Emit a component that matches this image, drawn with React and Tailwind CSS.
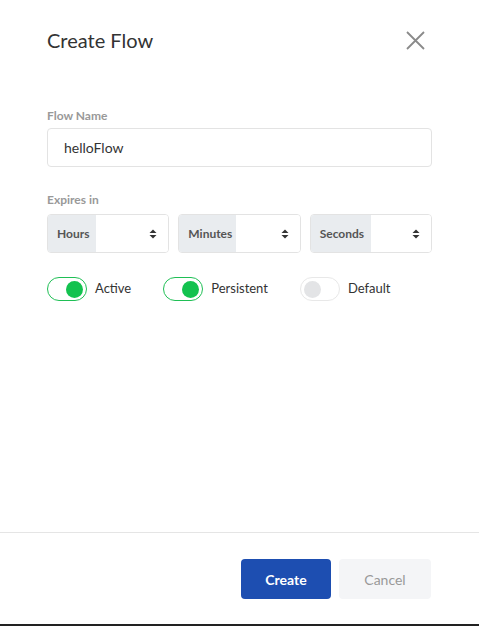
import { useState } from 'react'

function Spinner() {
  return (
    <svg width="10" height="12" viewBox="0 0 10 12" className="text-[#333]">
      <path d="M5 1.5 L8.5 5 H1.5 Z" fill="currentColor" />
      <path d="M5 10.5 L8.5 7 H1.5 Z" fill="currentColor" />
    </svg>
  )
}

function TimeField({ label, addonWidth }) {
  return (
    <div className="flex h-[39px] flex-1 overflow-hidden rounded-[4px] border border-[#e3e3e3]">
      <div
        className={`flex items-center bg-[#e9ecef] pl-[9px] text-[12px] font-bold text-[#555] ${addonWidth}`}
      >
        {label}
      </div>
      <div className="flex flex-1 items-center justify-end bg-white pr-[10px]">
        <Spinner />
      </div>
    </div>
  )
}

function Toggle({ on, label, onClick }) {
  return (
    <button type="button" onClick={onClick} className="flex items-center gap-[8px]">
      <span
        className={`flex h-[24px] w-[40px] items-center rounded-full border px-[3px] ${
          on ? 'justify-end border-[#1fbf55] bg-white' : 'justify-start border-[#e8e8e8] bg-white'
        }`}
      >
        <span
          className={`h-[17px] w-[17px] rounded-full ${on ? 'bg-[#13c24f]' : 'bg-[#e3e4e6]'}`}
        />
      </span>
      <span className="text-[13px] text-[#333]">{label}</span>
    </button>
  )
}

export default function App() {
  const [toggles, setToggles] = useState({ active: true, persistent: true, def: false })
  const flip = (k) => setToggles((t) => ({ ...t, [k]: !t[k] }))

  return (
    <div
      className="flex h-[626px] w-[479px] flex-col border-b-2 border-[#222] bg-white"
      style={{ fontFamily: 'Lato, "Open Sans", sans-serif' }}
    >
      <header className="flex items-center justify-between px-[47px] pt-[25px]">
        <h1 className="text-[20px] text-[#333]">Create Flow</h1>
        <button type="button" className="mr-[7px] text-[#8a8a8a]">
          <svg width="19" height="19" viewBox="0 0 19 19" fill="none" stroke="currentColor" strokeWidth="1.8">
            <path d="M1 1 L18 18 M18 1 L1 18" />
          </svg>
        </button>
      </header>

      <div className="flex-1 px-[47px] pt-[52px]">
        <label className="block text-[12px] font-bold text-[#999]">Flow Name</label>
        <input
          defaultValue="helloFlow"
          className="mt-[3px] h-[39px] w-full rounded-[4px] border border-[#e3e3e3] px-[16px] text-[14px] text-[#333] outline-none"
        />

        <label className="mt-[24px] block text-[12px] font-bold text-[#999]">Expires in</label>
        <div className="mt-[5px] flex gap-[9px]">
          <TimeField label="Hours" addonWidth="w-[48px]" />
          <TimeField label="Minutes" addonWidth="w-[57px]" />
          <TimeField label="Seconds" addonWidth="w-[60px]" />
        </div>

        <div className="mt-[24px] flex gap-[32px]">
          <Toggle on={toggles.active} label="Active" onClick={() => flip('active')} />
          <Toggle on={toggles.persistent} label="Persistent" onClick={() => flip('persistent')} />
          <Toggle on={toggles.def} label="Default" onClick={() => flip('def')} />
        </div>
      </div>

      <footer className="flex justify-end gap-[8px] border-t border-[#e5e5e5] px-[48px] pt-[26px] pb-[25px]">
        <button
          type="button"
          className="h-[40px] w-[90px] rounded-[4px] bg-[#1d4eb1] text-[14px] font-bold text-white"
        >
          Create
        </button>
        <button
          type="button"
          className="h-[40px] w-[92px] rounded-[4px] bg-[#f4f5f7] text-[14px] text-[#999]"
        >
          Cancel
        </button>
      </footer>
    </div>
  )
}
